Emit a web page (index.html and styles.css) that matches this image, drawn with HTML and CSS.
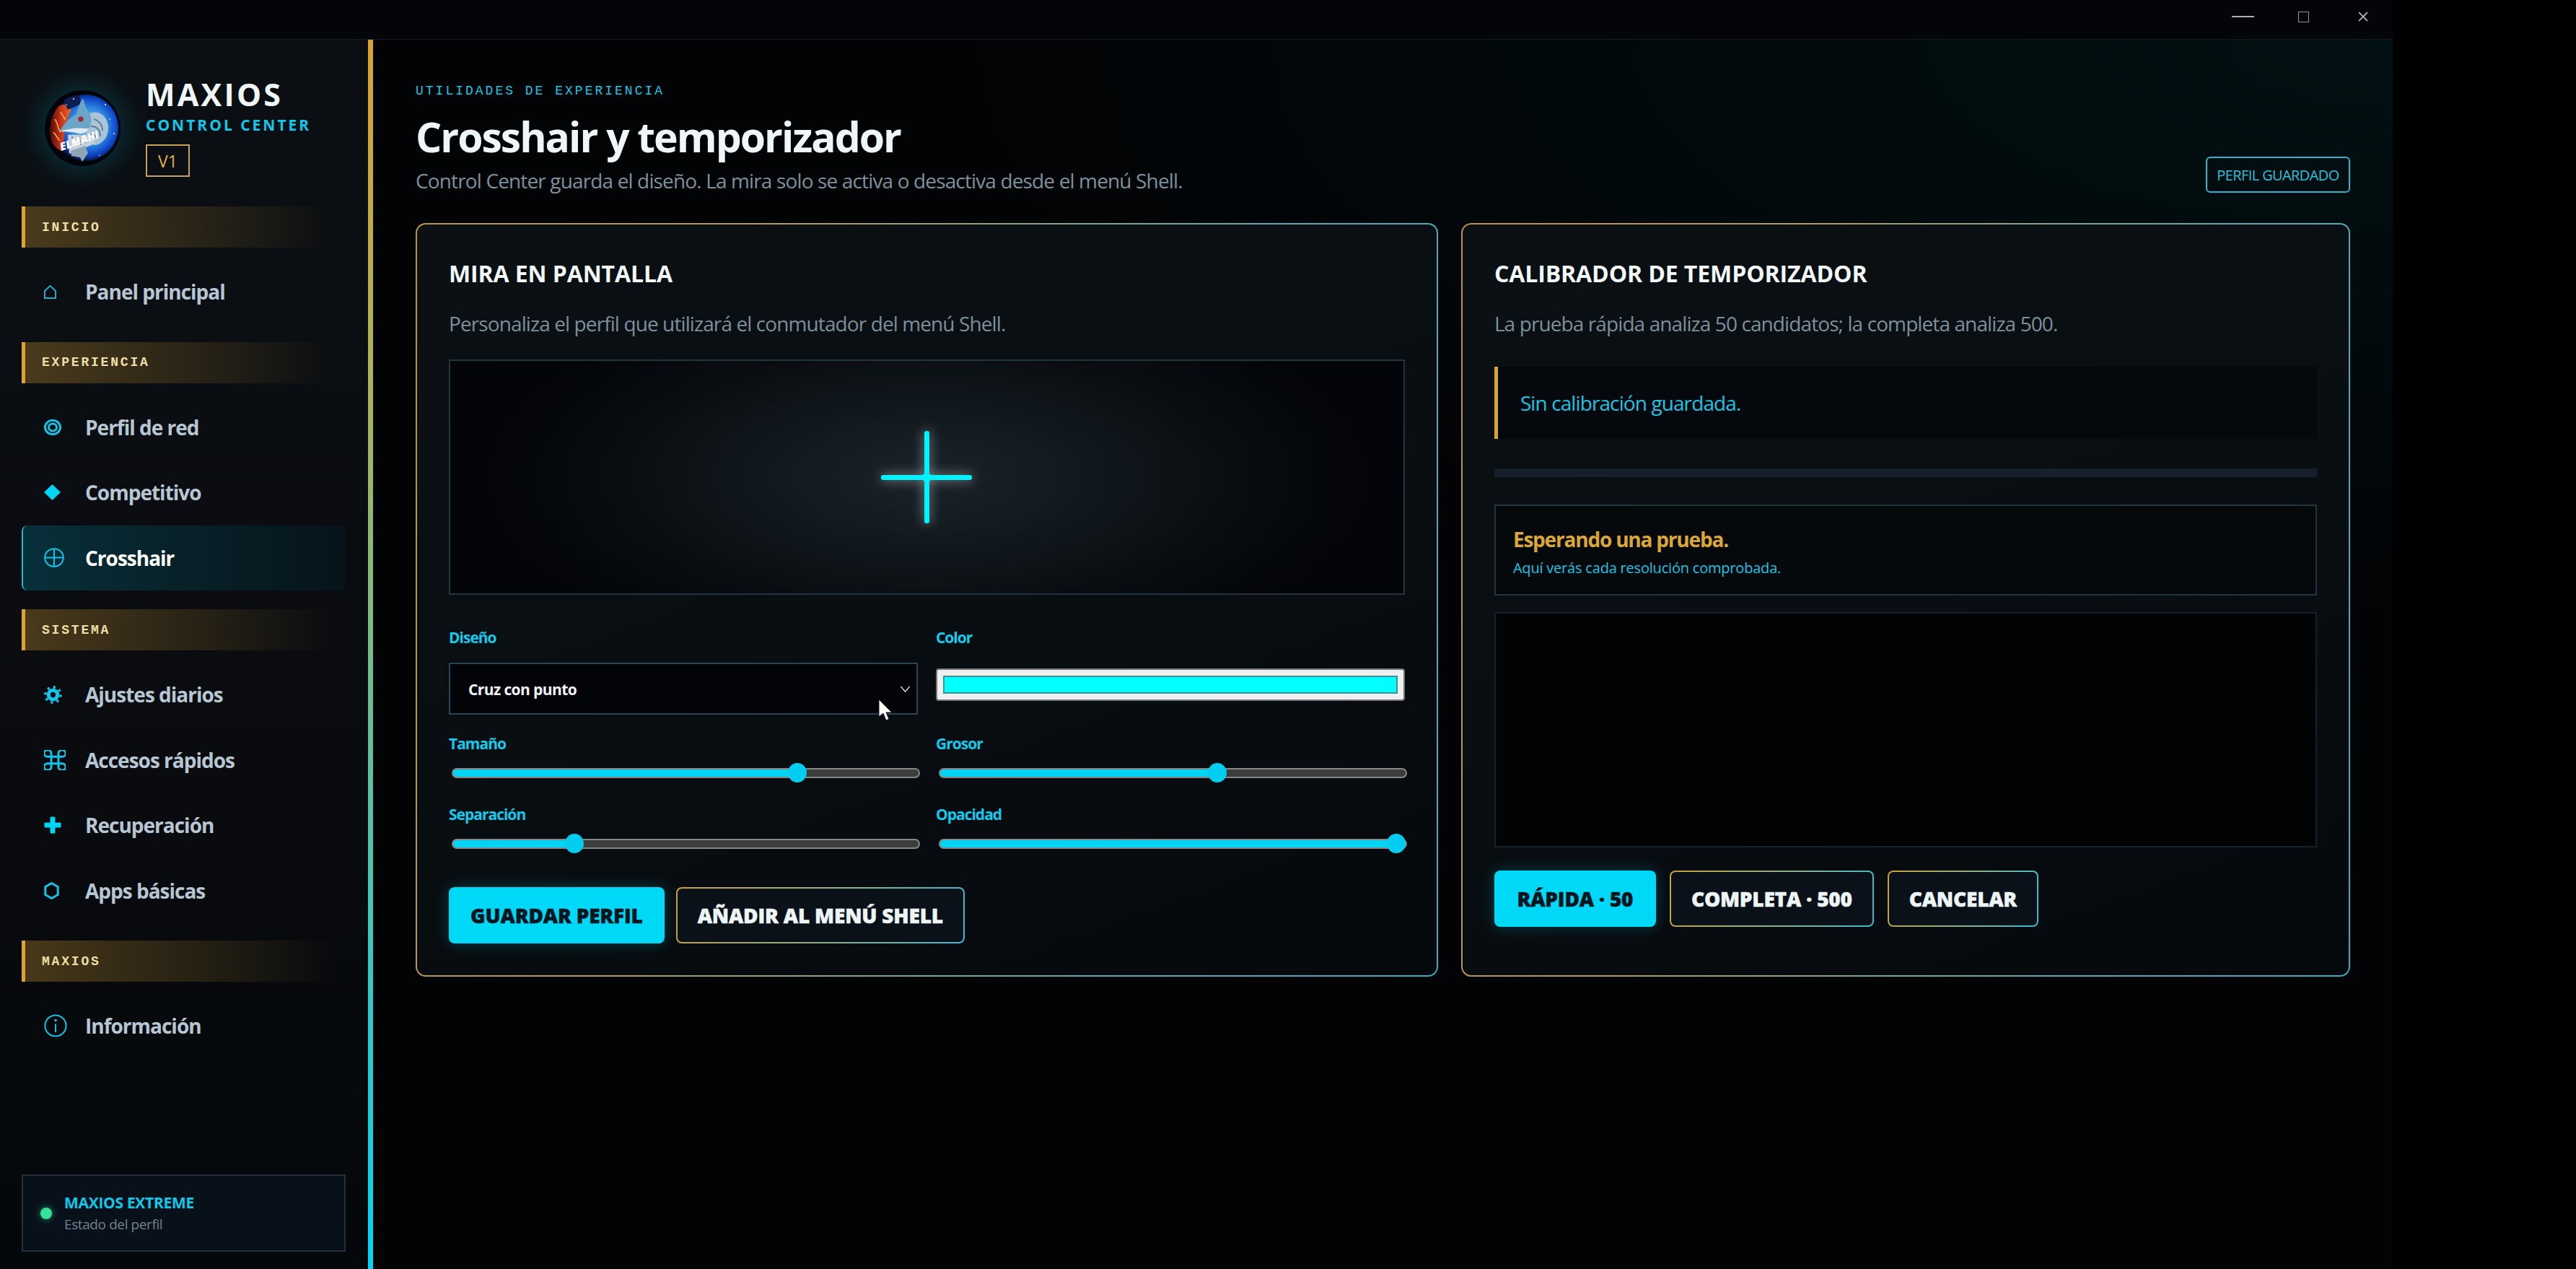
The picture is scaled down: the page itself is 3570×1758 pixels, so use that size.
FILE: index.html
```html
<!DOCTYPE html>
<html lang="es">
<head>
    <title>MaxiOS Control Center</title>
    <meta charset="UTF-8">
    <link rel="stylesheet" href="styles.css">
</head>
<body>
<div class="window">

    <header class="titlebar">
        <span class="win-min"></span>
        <span class="win-max"></span>
        <svg class="win-close" viewBox="0 0 14 14"><path d="M1 1l12 12M13 1L1 13"/></svg>
    </header>

    <div class="app">
        <aside class="sidebar">
            <div class="brand">
                <svg class="logo" viewBox="0 0 105 105">
                    <defs>
                        <radialGradient id="logoBlue" cx="0.55" cy="0.48" r="0.55">
                            <stop offset="0" stop-color="#8cc4e0"/>
                            <stop offset="0.5" stop-color="#2f8be0"/>
                            <stop offset="0.78" stop-color="#0c44c8"/>
                            <stop offset="1" stop-color="#030818"/>
                        </radialGradient>
                        <linearGradient id="logoFire" x1="0" y1="0" x2="1" y2="0">
                            <stop offset="0" stop-color="#4a0c08"/>
                            <stop offset="0.5" stop-color="#c8301a"/>
                            <stop offset="1" stop-color="#e8702c"/>
                        </linearGradient>
                    </defs>
                    <circle cx="52.5" cy="52.5" r="52.5" fill="#03040a"/>
                    <circle cx="56" cy="52" r="46" fill="url(#logoBlue)"/>
                    <path d="M20 22C8 34 3 56 11 74c4 6 10 10 14 10 2-14 2-40 12-56-4-8-11-10-17-6z" fill="url(#logoFire)"/>
                    <path d="M14 40c5 6 3 12 8 18M12 58c4 4 5 8 9 12M22 30c2 5 5 6 6 11" fill="none" stroke="#f6b04a" stroke-width="1.6"/>
                    <path d="M26 14c6-4 14-7 22-7l2 12-18 8z" fill="#0c1d4e"/>
                    <circle cx="84" cy="20" r="1" fill="#fff"/>
                    <circle cx="40" cy="12" r="1" fill="#fff"/>
                    <circle cx="96" cy="60" r="1" fill="#fff"/>
                    <circle cx="30" cy="20" r="0.8" fill="#fff"/>
                    <circle cx="90" cy="40" r="0.8" fill="#fff"/>
                    <circle cx="76" cy="90" r="0.8" fill="#fff"/>
                    <path d="M60 34c10-8 26-2 28 16 1 12-6 24-18 26l-14-4z" fill="#a9c4d4"/>
                    <path d="M68 40c7 2 12 8 12 16M64 50c7 0 13 4 13 14M62 62c4-2 8 0 10 4" fill="none" stroke="#56788e" stroke-width="1.8"/>
                    <path d="M53 11c-5 7-7 14-9 22C33 39 25 48 21 57c7 0 16-3 24-3 7 0 12 3 17-2 4-8 3-18-3-24-3-6-4-11-6-17z" fill="#6ba4c6"/>
                    <path d="M21 57c8 1 18 0 26 3 6 1 11-2 14-7-8 0-14-1-22 0-6 1-13 2-18 4z" fill="#dfeaf0"/>
                    <circle cx="50" cy="40" r="3.6" fill="#a02a2a"/>
                    <path d="M32 62c10-2 22 2 32 0l6 12-36 14z" fill="#c4d2db"/>
                    <path d="M38 64l2 14M48 64l2 12M56 63l2 10" fill="none" stroke="#6e8696" stroke-width="1.6"/>
                    <path d="M36 84l20-7 4 10-8 12-3-6-12-2z" fill="#8ea5b3"/>
                    <text class="logo-text" x="23" y="84" transform="rotate(-19 23 84)">ELMAHI</text>
                </svg>
                <div class="brand-text">
                    <div class="brand-name">MAXIOS</div>
                    <div class="brand-sub">CONTROL CENTER</div>
                    <div class="brand-ver">V1</div>
                </div>
            </div>

            <div class="nav-section first">INICIO</div>
            <a class="nav-item">
                <span class="nav-icon">
                    <svg class="i-line" width="17" height="19" viewBox="0 0 17 19"><path d="M1 18V8l7.5-7L16 8v10z"/></svg>
                </span>
                Panel principal
            </a>

            <div class="nav-section">EXPERIENCIA</div>
            <a class="nav-item">
                <span class="nav-icon">
                    <svg class="i-bold" width="24" height="22" viewBox="0 0 24 22"><ellipse cx="12" cy="11" rx="10.5" ry="9.7"/><ellipse cx="12" cy="11" rx="5.5" ry="5"/></svg>
                </span>
                Perfil de red
            </a>
            <a class="nav-item">
                <span class="nav-icon">
                    <svg class="i-fill" width="23" height="22" viewBox="0 0 23 22"><path d="M11.5 0L23 11 11.5 22 0 11z"/></svg>
                </span>
                Competitivo
            </a>
            <a class="nav-item active">
                <span class="nav-icon">
                    <svg class="i-bold thin" width="28" height="27" viewBox="0 0 28 27"><ellipse cx="14" cy="13.5" rx="12.8" ry="12.3"/><path d="M14 1v25M1 13.5h26"/></svg>
                </span>
                Crosshair
            </a>

            <div class="nav-section">SISTEMA</div>
            <a class="nav-item">
                <span class="nav-icon">
                    <svg width="25" height="25" viewBox="0 0 24 24"><circle class="gear-teeth" cx="12" cy="12" r="10.2"/><circle class="gear-ring" cx="12" cy="12" r="6"/></svg>
                </span>
                Ajustes diarios
            </a>
            <a class="nav-item">
                <span class="nav-icon">
                    <svg class="i-bold" width="30" height="28" viewBox="3 3 18 18" preserveAspectRatio="none"><path d="M15 6v12a3 3 0 1 0 3-3H6a3 3 0 1 0 3 3V6a3 3 0 1 0-3 3h12a3 3 0 1 0-3-3" vector-effect="non-scaling-stroke"/></svg>
                </span>
                Accesos rápidos
            </a>
            <a class="nav-item">
                <span class="nav-icon">
                    <svg class="i-fill" width="24" height="24" viewBox="0 0 24 24"><path d="M8.5 1.5a1 1 0 0 1 1-1h5a1 1 0 0 1 1 1v7h7a1 1 0 0 1 1 1v5a1 1 0 0 1-1 1h-7v7a1 1 0 0 1-1 1h-5a1 1 0 0 1-1-1v-7h-7a1 1 0 0 1-1-1v-5a1 1 0 0 1 1-1h7z"/></svg>
                </span>
                Recuperación
            </a>
            <a class="nav-item">
                <span class="nav-icon">
                    <svg class="i-bold" width="21" height="24" viewBox="0 0 21 24"><path d="M10.5 1.5l8.7 5v11l-8.7 5-8.7-5v-11z"/></svg>
                </span>
                Apps básicas
            </a>

            <div class="nav-section">MAXIOS</div>
            <a class="nav-item">
                <span class="nav-icon">
                    <svg class="i-bold thin" width="32" height="32" viewBox="0 0 32 32"><circle cx="16" cy="16" r="14.6"/><path d="M16 13.5V25"/><circle class="dot" cx="16" cy="8.6" r="1.8"/></svg>
                </span>
                Información
            </a>

            <div class="profile-state">
                <span class="state-dot"></span>
                <div>
                    <div class="state-title">MAXIOS EXTREME</div>
                    <div class="state-sub">Estado del perfil</div>
                </div>
            </div>
        </aside>

        <main class="content">
            <div class="page-head">
                <div>
                    <div class="eyebrow">UTILIDADES DE EXPERIENCIA</div>
                    <h1>Crosshair y temporizador</h1>
                    <p class="page-sub">Control Center guarda el diseño. La mira solo se activa o desactiva desde el menú Shell.</p>
                </div>
                <span class="pill">PERFIL GUARDADO</span>
            </div>

            <div class="cards">
                <section class="card">
                    <h2>MIRA EN PANTALLA</h2>
                    <p class="card-sub">Personaliza el perfil que utilizará el conmutador del menú Shell.</p>

                    <div class="preview">
                        <div class="cross">
                            <span class="cross-h"></span>
                            <span class="cross-v"></span>
                            <span class="cross-dot"></span>
                        </div>
                    </div>

                    <div class="form-grid">
                        <div class="field">
                            <label>Diseño</label>
                            <div class="select">
                                Cruz con punto
                                <svg class="chevron" viewBox="0 0 16 10"><path d="M1 1l7 8 7-8"/></svg>
                                <svg class="cursor" viewBox="0 0 20 31"><path d="M1 1v24l6-5 4 10 4-2-4-9h8z"/></svg>
                            </div>
                        </div>
                        <div class="field">
                            <label>Color</label>
                            <div class="color-input"><span class="color-swatch"></span></div>
                        </div>
                        <div class="field">
                            <label>Tamaño</label>
                            <input class="range" type="range" min="0" max="100" value="75" style="--v:75">
                        </div>
                        <div class="field">
                            <label>Grosor</label>
                            <input class="range" type="range" min="0" max="100" value="60" style="--v:60">
                        </div>
                        <div class="field low">
                            <label>Separación</label>
                            <input class="range" type="range" min="0" max="100" value="25" style="--v:25">
                        </div>
                        <div class="field low">
                            <label>Opacidad</label>
                            <input class="range" type="range" min="0" max="100" value="100" style="--v:100">
                        </div>
                    </div>

                    <div class="actions form-actions">
                        <button class="btn primary">GUARDAR PERFIL</button>
                        <button class="btn">AÑADIR AL MENÚ SHELL</button>
                    </div>
                </section>

                <section class="card">
                    <h2>CALIBRADOR DE TEMPORIZADOR</h2>
                    <p class="card-sub">La prueba rápida analiza 50 candidatos; la completa analiza 500.</p>

                    <div class="status">Sin calibración guardada.</div>
                    <div class="progress"></div>

                    <div class="result">
                        <div class="result-title">Esperando una prueba.</div>
                        <div class="result-sub">Aquí verás cada resolución comprobada.</div>
                    </div>
                    <div class="log"></div>

                    <div class="actions log-actions">
                        <button class="btn primary">RÁPIDA · 50</button>
                        <button class="btn">COMPLETA · 500</button>
                        <button class="btn">CANCELAR</button>
                    </div>
                </section>
            </div>
        </main>
    </div>
</div>
</body>
</html>
```

FILE: styles.css
```css
* {
    box-sizing: border-box;
}
body {
    margin: 0;
    background: #000;
    font-family: "Open Sans", "Noto Sans", sans-serif;
    color: #eef5f7;
}
.window {
    width: 3316px;
    height: 1758px;
    display: flex;
    flex-direction: column;
    overflow: hidden;
}

/* title bar */
.titlebar {
    height: 55px;
    flex: none;
    background: #030508;
    border-bottom: 1px solid #121b1f;
    display: flex;
    align-items: flex-start;
    position: relative;
}
.win-min {
    margin: 22px 0 0 3093px;
    width: 31px;
    height: 2px;
    background: #a9afb3;
}
.win-max {
    margin: 16px 0 0 61px;
    width: 15px;
    height: 15px;
    border: 1.5px solid #8f959a;
}
.win-close {
    margin: 16px 0 0 68px;
    width: 14px;
    height: 14px;
    fill: none;
    stroke: #c4c9cc;
    stroke-width: 1.6;
}

.app {
    flex: 1;
    display: flex;
    min-height: 0;
}

/* sidebar */
.sidebar {
    width: 517px;
    flex: none;
    display: flex;
    flex-direction: column;
    padding: 54px 31px 24px 30px;
    background: linear-gradient(180deg, #0b0f13 0%, #0a0c10 50%, #05080b 100%);
    border-right: 7px solid;
    border-image: linear-gradient(180deg, #dba333 0%, #a9b45c 30%, #5cc0a0 60%, #00d4f5 100%) 1;
}
.brand {
    display: flex;
    align-items: center;
    gap: 35px;
    padding-left: 32px;
}
.logo {
    width: 105px;
    height: 105px;
    flex: none;
    border-radius: 50%;
    box-shadow: 0 0 44px rgba(0, 190, 230, 0.3);
}
.logo-text {
    font-family: "Open Sans", sans-serif;
    font-size: 15px;
    font-weight: 800;
    font-style: italic;
    fill: #fff;
}
.brand-name {
    font-size: 43px;
    font-weight: 700;
    line-height: 44px;
    letter-spacing: 3.2px;
    color: #eff6f8;
}
.brand-sub {
    font-size: 21px;
    font-weight: 700;
    line-height: 26px;
    margin-top: 7px;
    letter-spacing: 3px;
    color: #12c8ea;
}
.brand-ver {
    width: 61px;
    height: 45px;
    margin-top: 14px;
    border: 2px solid #c9a05a;
    color: #dcb24e;
    font-size: 23px;
    display: flex;
    align-items: center;
    justify-content: center;
}
.nav-section {
    height: 57px;
    flex: none;
    margin-top: 24px;
    margin-bottom: 16px;
    padding-left: 23px;
    display: flex;
    align-items: center;
    border-left: 5px solid #dba333;
    background: linear-gradient(90deg, rgba(219, 163, 51, 0.3) 0%, rgba(219, 163, 51, 0.14) 55%, rgba(219, 163, 51, 0) 96%);
    font-family: "Liberation Mono", monospace;
    font-size: 18px;
    font-weight: 700;
    letter-spacing: 2.8px;
    color: #efe0a8;
}
.nav-section.first {
    margin-top: 41px;
}
.nav-item {
    height: 90.5px;
    flex: none;
    display: flex;
    align-items: center;
    padding-left: 31px;
    font-size: 28px;
    font-weight: 700;
    letter-spacing: -1px;
    color: #b6c6d2;
    border-radius: 8px;
}
.nav-item.active {
    padding-left: 29px;
    margin-bottom: 2px;
    color: #fff;
    border-left: 2px solid #1fb6d4;
    background: linear-gradient(90deg, #07303b 0%, #08222a 45%, #06141a 100%);
}
.nav-icon {
    width: 57px;
    flex: none;
    display: flex;
    align-items: center;
}
.nav-icon svg {
    display: block;
}
.i-line {
    fill: none;
    stroke: #2aa6c6;
    stroke-width: 2;
}
.i-bold {
    fill: none;
    stroke: #14c4e6;
    stroke-width: 3;
}
.i-bold.thin {
    stroke-width: 2;
}
.i-bold .dot {
    fill: #14c4e6;
    stroke: none;
}
.i-fill {
    fill: #00d4f5;
}
.gear-ring {
    fill: none;
    stroke: #12c8ea;
    stroke-width: 5;
}
.gear-teeth {
    fill: none;
    stroke: #12c8ea;
    stroke-width: 3.4;
    stroke-dasharray: 3 5;
}
.profile-state {
    margin-top: auto;
    height: 107px;
    flex: none;
    display: flex;
    align-items: center;
    gap: 17px;
    padding-left: 24px;
    background: #08111a;
    border: 2px solid #22313b;
}
.state-dot {
    width: 16px;
    height: 16px;
    flex: none;
    border-radius: 50%;
    background: #36e29a;
    box-shadow: 0 0 10px rgba(54, 226, 154, 0.6);
}
.state-title {
    font-size: 21px;
    font-weight: 700;
    line-height: 30px;
    letter-spacing: -0.3px;
    color: #12c8ea;
}
.state-sub {
    font-size: 19px;
    line-height: 30px;
    letter-spacing: -0.4px;
    color: #71838f;
}

/* main area */
.content {
    flex: 1;
    min-width: 0;
    padding: 59px 59px 0 59px;
    background: radial-gradient(ellipse 2000px 800px at 100% 0%, rgba(0, 90, 95, 0.16), rgba(0, 90, 95, 0) 100%), #020305;
}
.page-head {
    display: flex;
    justify-content: space-between;
    align-items: flex-end;
}
.eyebrow {
    font-family: "Liberation Mono", monospace;
    font-size: 18px;
    line-height: 24px;
    letter-spacing: 3px;
    color: #1fc4e4;
}
h1 {
    margin: 15px 0 0;
    font-size: 57px;
    font-weight: 700;
    line-height: 72px;
    letter-spacing: -2px;
    color: #eff6f8;
}
.page-sub {
    margin: 6px 0 0;
    font-size: 28px;
    line-height: 38px;
    letter-spacing: -0.86px;
    color: #7d919e;
}
.pill {
    height: 50px;
    width: 200px;
    margin-bottom: 2px;
    border: 2px solid #2fb4cf;
    border-radius: 6px;
    display: flex;
    align-items: center;
    justify-content: center;
    font-size: 20px;
    letter-spacing: -0.6px;
    color: #2fc0dc;
}
.cards {
    margin-top: 40px;
    display: grid;
    grid-template-columns: 1.15fr 1fr;
    gap: 32px;
}
.card {
    height: 1044px;
    padding: 48px 44px 44px;
    border: 2px solid transparent;
    border-radius: 14px;
    background: linear-gradient(160deg, #0b1014 0%, #090e12 50%, #05090c 100%) padding-box,
                linear-gradient(105deg, #b9934b 0%, #b39a60 30%, #5fa9ae 70%, #3fa9bf 100%) border-box;
}
h2 {
    margin: 0;
    font-size: 32px;
    font-weight: 700;
    line-height: 40px;
    letter-spacing: -0.1px;
    color: #f3f8fa;
}
.card-sub {
    margin: 29px 0 0;
    font-size: 28px;
    line-height: 40px;
    letter-spacing: -0.9px;
    color: #7d8f9b;
}

/* crosshair preview */
.preview {
    margin-top: 30px;
    height: 326px;
    border: 2px solid #24343f;
    background: radial-gradient(ellipse 46% 80% at 50% 50%, #1a2329 0%, #131b20 30%, #090d11 70%, #030508 100%);
    display: flex;
    align-items: center;
    justify-content: center;
}
.cross {
    width: 126px;
    height: 128px;
    position: relative;
    filter: drop-shadow(0 0 8px rgba(255, 255, 255, 0.55));
}
.cross-h,
.cross-v,
.cross-dot {
    position: absolute;
    background: #00f4ff;
}
.cross-h {
    left: 0;
    top: 61px;
    width: 126px;
    height: 7px;
    border-radius: 3px;
}
.cross-v {
    left: 60px;
    top: 0;
    width: 7px;
    height: 128px;
    border-radius: 3px;
}
.cross-dot {
    left: 57px;
    top: 58px;
    width: 13px;
    height: 13px;
    border-radius: 50%;
}

/* form */
.form-grid {
    margin-top: 45px;
    display: grid;
    grid-template-columns: 1fr 1fr;
    column-gap: 25px;
    row-gap: 26px;
}
.field {
    display: flex;
    flex-direction: column;
}
.field.low {
    margin-top: 4px;
}
label {
    font-size: 21px;
    font-weight: 700;
    line-height: 28px;
    margin-bottom: 13px;
    letter-spacing: -1px;
    color: #12cbee;
}
.select {
    position: relative;
    height: 72px;
    margin-top: 8px;
    padding: 1px 0 0 25px;
    display: flex;
    align-items: center;
    background: #020407;
    border: 2px solid #2c4452;
    font-size: 21px;
    font-weight: 700;
    letter-spacing: -0.6px;
    color: #f1f5f7;
}
.chevron {
    position: absolute;
    right: 8px;
    top: 30px;
    width: 15px;
    height: 9px;
    fill: none;
    stroke: #e4e8ea;
    stroke-width: 1.6;
}
.cursor {
    position: absolute;
    left: 593px;
    top: 48px;
    width: 20px;
    height: 31px;
    fill: #fff;
    stroke: #10151a;
    stroke-width: 1;
}
.color-input {
    height: 45px;
    margin-top: 16px;
    padding: 8px;
    background: #efefef;
    border: 2px solid #767676;
    border-radius: 4px;
}
.color-swatch {
    display: block;
    height: 100%;
    background: #00ffff;
    border: 2px solid #3f8f93;
}
.range {
    appearance: none;
    -webkit-appearance: none;
    display: block;
    width: calc(100% + 3px);
    height: 27px;
    margin: 0;
    padding: 0 0 0 4px;
    background: none;
}
.range::-webkit-slider-runnable-track {
    box-sizing: border-box;
    height: 14px;
    border: 2px solid #868686;
    border-radius: 7px;
    background: linear-gradient(90deg, #00d4f5 calc(var(--v) * 1%), #3d3d3d 0);
}
.range::-webkit-slider-thumb {
    -webkit-appearance: none;
    width: 26px;
    height: 27px;
    margin-top: -8.5px;
    border-radius: 50%;
    background: #00cdf0;
}

/* buttons */
.actions {
    display: flex;
    gap: 19px;
}
.form-actions {
    margin-top: 47px;
    gap: 16px;
}
.log-actions {
    margin-top: 32px;
}
.btn {
    height: 78px;
    padding: 0 28px;
    border: 2px solid transparent;
    border-radius: 8px;
    font-family: "Open Sans", sans-serif;
    font-size: 28px;
    font-weight: 800;
    letter-spacing: -0.2px;
    -webkit-text-stroke: 0.5px currentColor;
    color: #eef5f7;
    background: linear-gradient(#0b1118, #0b1118) padding-box,
                linear-gradient(110deg, #c9a040 0%, #8bb28c 55%, #3cb8d4 100%) border-box;
}
.btn.primary {
    min-width: 224px;
    border: 0;
    padding: 0 30px;
    color: #04161e;
    background: #00d8f8;
    box-shadow: 0 0 20px rgba(0, 216, 248, 0.25);
}

/* timer calibrator */
.status {
    margin-top: 40px;
    height: 100px;
    padding-left: 31px;
    display: flex;
    align-items: center;
    background: #05090d;
    border-left: 5px solid #dba333;
    font-size: 28px;
    letter-spacing: -0.9px;
    color: #1fc4e4;
}
.progress {
    margin-top: 41px;
    height: 12px;
    background: #17202a;
}
.result {
    margin-top: 38px;
    height: 126px;
    padding: 28px 24px 0;
    background: #05090c;
    border: 2px solid #24343f;
}
.result-title {
    font-size: 28px;
    font-weight: 700;
    line-height: 36px;
    letter-spacing: -1.2px;
    color: #dba63a;
}
.result-sub {
    margin-top: 8px;
    font-size: 20px;
    line-height: 28px;
    letter-spacing: -0.2px;
    color: #1fc4e4;
}
.log {
    margin-top: 23px;
    height: 326px;
    background: #020304;
    border: 2px solid #16222b;
}
```
